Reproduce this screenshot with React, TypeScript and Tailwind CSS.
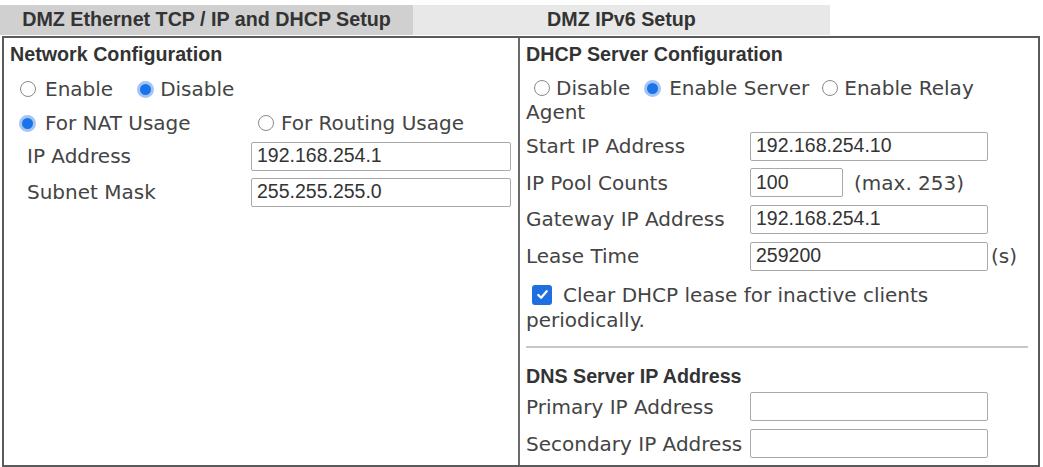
//
// DMZ setup panel.
//

const label = "font-['DejaVu_Sans',sans-serif] text-[20px] text-[#444]";
const head = "font-['Liberation_Sans',sans-serif] font-bold text-[19.7px] text-[#333]";

function Radio({ on }: { on?: boolean }) {
    return on ? (
        <span className="inline-flex w-[17px] h-[17px] rounded-full bg-[#1a73e8] border-[3px] border-[#a3c5f5] shrink-0" />
    ) : (
        <span className="inline-block w-[16px] h-[16px] rounded-full border border-[#8a8a8a] bg-white shrink-0" />
    );
}

function Field({ value = "", w = "w-[238px]" }: { value?: string; w?: string }) {
    return (
        <div className={`${w} h-[29px] border border-[#a9a9a9] rounded-[2px] bg-white px-[5px] flex items-center font-['Liberation_Sans',sans-serif] text-[19.5px] text-[#333]`}>
            {value}
        </div>
    );
}

function Row({ name, children, h = "h-[36px]" }: { name: string; children: React.ReactNode; h?: string }) {
    return (
        <div className={`flex items-center ${h}`}>
            <span className={`${label} w-[224px] shrink-0`}>{name}</span>
            {children}
        </div>
    );
}

export default function App() {
    return (
        <div className="w-[1043px] h-[467px] bg-white overflow-hidden">
            {/* tabs */}
            <div className="flex pt-[5px] h-[36px]">
                <div className={`${head} w-[413px] h-[30px] bg-[#d0d0d0] flex items-center justify-center`}>
                    DMZ Ethernet TCP / IP and DHCP Setup
                </div>
                <div className={`${head} w-[417px] h-[30px] bg-[#e8e8e8] flex items-center justify-center`}>
                    DMZ IPv6 Setup
                </div>
            </div>

            {/* panel */}
            <div className="ml-[2px] w-[1038px] h-[431px] border-2 border-[#5a5a5a] flex">
                {/* left column */}
                <div className="w-[516px] h-full border-r-2 border-[#6a6a6a] flex flex-col pl-[6px] pr-[5px]">
                    <div className={`${head} h-[34px] flex items-center`}>Network Configuration</div>
                    <div className={`${label} h-[34px] flex items-center pl-[10px]`}>
                        <Radio />
                        <span className="ml-[9px]">Enable</span>
                        <span className="ml-[24px] flex"><Radio on /></span>
                        <span className="ml-[6px]">Disable</span>
                    </div>
                    <div className={`${label} h-[34px] flex items-center pl-[9px]`}>
                        <Radio on />
                        <span className="ml-[9px] w-[213px]">For NAT Usage</span>
                        <Radio />
                        <span className="ml-[7px]">For Routing Usage</span>
                    </div>
                    <div className="pl-[17px] -mt-[2px]">
                        <Row name="IP Address"><Field value="192.168.254.1" w="w-[260px]" /></Row>
                        <Row name="Subnet Mask"><Field value="255.255.255.0" w="w-[260px]" /></Row>
                    </div>
                </div>

                {/* right column */}
                <div className="flex-1 h-full flex flex-col pl-[6px] pr-[8px]">
                    <div className={`${head} h-[34px] flex items-center`}>DHCP Server Configuration</div>
                    <div className={`${label} pt-[4px]`}>
                        <div className="flex items-center h-[24px] pl-[8px]">
                            <Radio />
                            <span className="ml-[6px]">Disable</span>
                            <span className="ml-[14px] flex"><Radio on /></span>
                            <span className="ml-[8px]">Enable Server</span>
                            <span className="ml-[13px] flex"><Radio /></span>
                            <span className="ml-[6px]">Enable Relay</span>
                        </div>
                        <div className="h-[24px] flex items-center">Agent</div>
                    </div>
                    <div className="pt-[4px]">
                        <Row name="Start IP Address"><Field value="192.168.254.10" /></Row>
                        <Row name="IP Pool Counts" h="h-[37px]">
                            <Field value="100" w="w-[93px]" />
                            <span className={`${label} ml-[11px]`}>(max. 253)</span>
                        </Row>
                        <Row name="Gateway IP Address"><Field value="192.168.254.1" /></Row>
                        <Row name="Lease Time" h="h-[38px]">
                            <Field value="259200" />
                            <span className={`${label} ml-[3px]`}>(s)</span>
                        </Row>
                    </div>
                    <div className={`${label} pt-[7px]`}>
                        <div className="flex items-center h-[25px] pl-[6px]">
                            <span className="inline-flex w-[20px] h-[20px] rounded-[3px] bg-[#1f6fe0] items-center justify-center">
                                <svg viewBox="0 0 16 16" className="w-[15px] h-[15px]">
                                    <path d="M3.5 8.5l3 3 6-7" fill="none" stroke="white" strokeWidth="2.4" strokeLinecap="round" strokeLinejoin="round" />
                                </svg>
                            </span>
                            <span className="ml-[11px]">Clear DHCP lease for inactive clients</span>
                        </div>
                        <div className="h-[25px] flex items-center">periodically.</div>
                    </div>
                    <div className="mt-[14px] h-[2px] bg-[#c8c8c8] mr-[2px]" />
                    <div className={`${head} h-[40px] pt-[18px] pb-[0px] flex items-center`}>DNS Server IP Address</div>
                    <Row name="Primary IP Address" h="h-[37px]"><Field /></Row>
                    <Row name="Secondary IP Address" h="h-[37px]"><Field /></Row>
                </div>
            </div>
        </div>
    );
}
